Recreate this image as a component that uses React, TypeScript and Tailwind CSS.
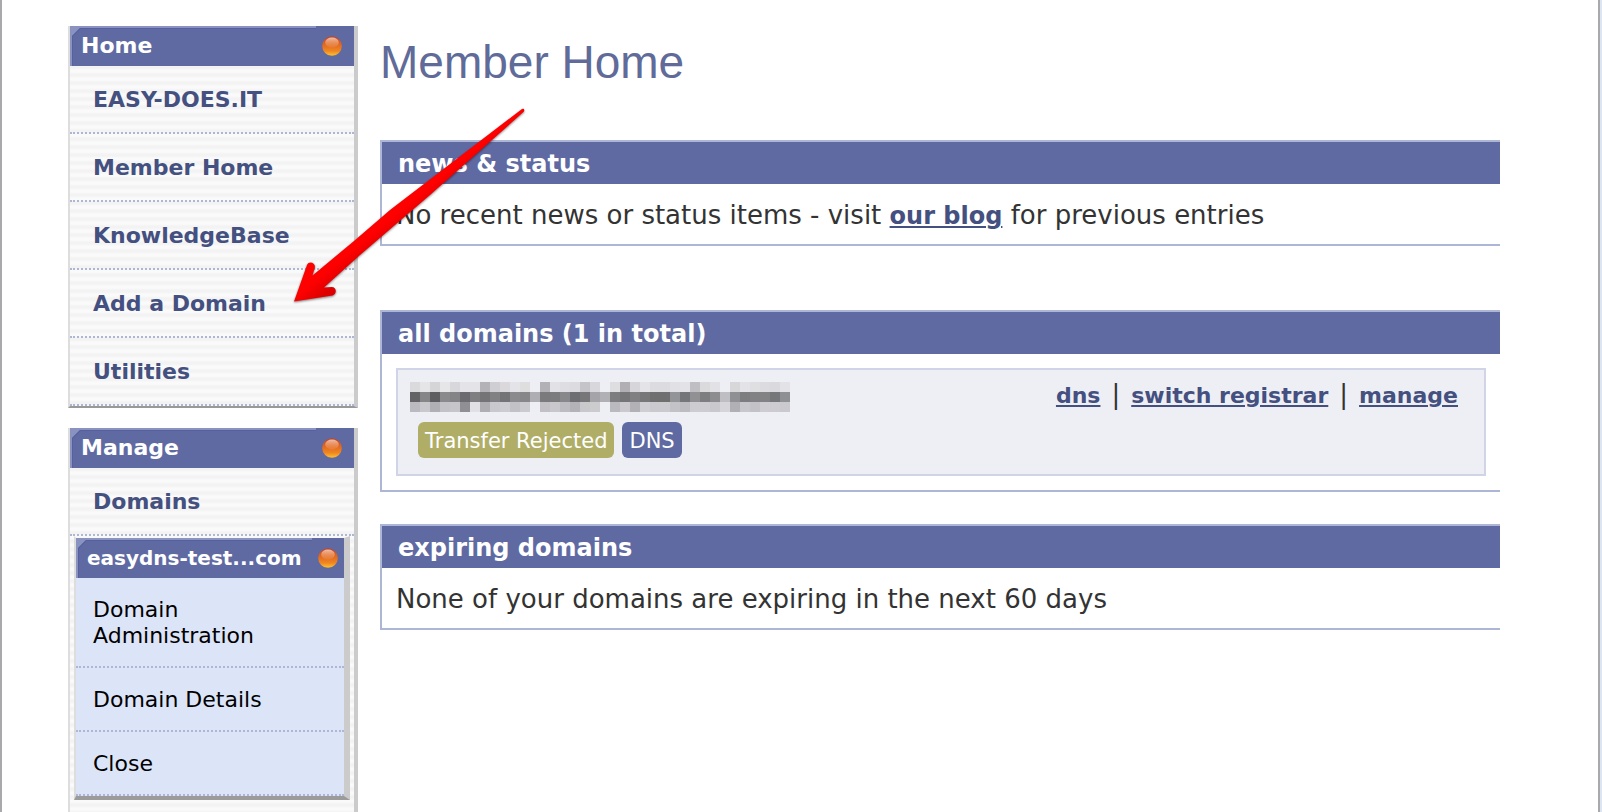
import type { ReactNode } from "react";

const ROWS: string[][] = [
  ["dadadc", "e5e5e7", "d5d5d7", "e6e6e8", "d8d8dc", "e4e4e8", "e4e4e8", "b3b3b7", "cfcfd3", "dbd8dc", "e4e4e8", "dededf", "", "b1b1b6", "e2e2e6", "dedee2", "dcdce0", "c5c5c9", "d8d8dc", "", "dedee0", "b1aeb4", "d6d6da", "e4e4e8", "dcdce0", "dcdce0", "e1e1e5", "e3e3e7", "bfbfc3", "dadadd", "e2e2e6", "", "d7d7da", "e3e3e7", "dfdfe2", "dcdce0", "dadade", "e3e3e7"],
  ["636366", "868688", "5e5e60", "8a8a8c", "848486", "6c6c70", "7f7f82", "747477", "818184", "747476", "8b8b8e", "87878a", "aeaeb3", "7a7a7c", "7c7c7e", "88888a", "6d6f72", "77777a", "a4a4a9", "b0b0b5", "7d7d80", "757578", "808083", "77777a", "6f6f70", "6f6f70", "929497", "757679", "919194", "7c7e7f", "8d8d90", "bfbfc3", "8e9093", "7d7d80", "828285", "828284", "757779", "8f9093"],
  ["babac0", "c8c8cd", "b0b0b4", "c3c3c7", "c5c5ca", "8f8f94", "e0e0e5", "aeaeb3", "c8c8cd", "cdcdd1", "c2c2c6", "cbcbcf", "", "c2c0c6", "c8c8cc", "bcbcc1", "b2b2b7", "c8c8cd", "cccccf", "", "b9b9bf", "cbc8ce", "b1b1b6", "cfcfd3", "cacace", "cacacf", "c2c2c7", "bcbcc1", "cdcdd1", "cdcdd1", "c8c8cd", "d6d6da", "b0b0b5", "c7c7cc", "c2c2c7", "cfccd1", "cecbd0", "c9c9ce"],
];

function Orb() {
  return (
    <svg width="20" height="20" viewBox="0 0 20 20" aria-hidden="true">
      <defs>
        <linearGradient id="orb-body" x1="0" y1="0" x2="0" y2="1">
          <stop offset="0" stopColor="#b8402c" />
          <stop offset="0.35" stopColor="#de621f" />
          <stop offset="0.75" stopColor="#f08622" />
          <stop offset="1" stopColor="#fdc52c" />
        </linearGradient>
        <linearGradient id="orb-shine" x1="0" y1="0" x2="0" y2="1">
          <stop offset="0" stopColor="#f3c0a4" />
          <stop offset="1" stopColor="#ec8a4c" stopOpacity="0.4" />
        </linearGradient>
      </defs>
      <circle cx="10" cy="10" r="9.8" fill="url(#orb-body)" />
      <ellipse cx="10" cy="6.5" rx="6.8" ry="5" fill="url(#orb-shine)" />
    </svg>
  );
}

function MenuHeader({ title, nested = false }: { title: string; nested?: boolean }) {
  return (
    <div className="relative flex h-10 items-center justify-between bg-[#606aa2] pr-3 pl-[11px]">
      <svg
        className={nested ? "absolute top-0 left-0 h-10 w-[236px]" : "absolute top-0 left-0 h-10 w-[246px]"}
        viewBox="0 0 246 40"
        preserveAspectRatio="xMinYMin slice"
        aria-hidden="true"
      >
        <path d="M0 0H246V2H10L2 10V40H0Z" fill="#8a93c0" />
        <path d="M246 2H10L2 10V40H3V10.500L10.500 3H246Z" fill="#5660a0" />
      </svg>
      <h2
        className={
          nested
            ? "relative text-xl leading-6 font-bold whitespace-nowrap text-white"
            : "relative text-[22px] leading-6 font-bold text-white"
        }
      >
        {title}
      </h2>
      <span className={nested ? "relative -mr-1.5" : "relative"}>
        <Orb />
      </span>
    </div>
  );
}

const stripes = "bg-[repeating-linear-gradient(to_bottom,#f3f3f3_0px,#f3f3f3_2px,#fafafa_4px,#fafafa_6px,#f3f3f3_8px)]";
const menuBox = "border-r-4 border-b-2 border-l-2 border-r-[#cbcbcb] border-b-[#999999] border-l-[#dddddd]";

function MenuItem({ children }: { children: ReactNode }) {
  return (
    <li className="border-b-2 border-dotted border-[#aeb6d6]">
      <a href="#" className="block px-[23px] pt-[21px] pb-[19px] text-[22px] leading-[26px] font-bold text-[#44507f]">
        {children}
      </a>
    </li>
  );
}

function SubItem({ children }: { children: ReactNode }) {
  return (
    <li className="border-b-2 border-dotted border-[#aeb6d6]">
      <a href="#" className="block pt-[19px] pr-12 pb-[17px] pl-[17px] text-[22px] leading-[26px] text-black">
        {children}
      </a>
    </li>
  );
}

function Panel({ title, children }: { title: string; children: ReactNode }) {
  return (
    <section className="border-y-2 border-l-2 border-[#aeb6d6] bg-white">
      <h2 className="bg-[#606aa2] px-4 pt-[9px] pb-[7px] text-2xl leading-[26px] font-bold text-white">{title}</h2>
      {children}
    </section>
  );
}

function DomainName() {
  return (
    <svg width="380" height="30" viewBox="0 0 380 30" shapeRendering="crispEdges" role="img" aria-label="Hidden domain name">
      {ROWS.map((row, y) =>
        row.map((c, x) => (c ? <rect key={x + "-" + y} x={x * 10} y={y * 10} width="10" height="10" fill={"#" + c} /> : null)),
      )}
    </svg>
  );
}

function Arrow() {
  return (
    <svg
      className="pointer-events-none absolute top-[100px] left-[278px] overflow-visible"
      width="260"
      height="220"
      viewBox="0 0 260 220"
      aria-hidden="true"
    >
      <defs>
        <linearGradient id="arrow-fill" gradientUnits="userSpaceOnUse" x1="93" y1="115" x2="112" y2="138">
          <stop offset="0.45" stopColor="#ff0000" />
          <stop offset="1" stopColor="#de0000" />
        </linearGradient>
      </defs>
      <path
        d="M14 201.500L27 165C28.500 161 35 162 35 167L32.500 175.500L74 141L110 110L242 9Q245 8 244 11.500L150 95L80 155L44 187.500L51.500 187C57 187 57 194 52.500 195.500Z"
        fill="url(#arrow-fill)"
        className="drop-shadow-[0px_1px_1px_rgba(0,0,0,0.5)]"
      />
    </svg>
  );
}

const linkStyle = "font-bold text-[#44507f] underline decoration-2 underline-offset-2";
const message = "px-3.5 pt-4 pb-3.5 text-[26px] leading-[30px]";

export default function App() {
  return (
    <div className="bg-[#dde4f2] pr-0.5">
      <div className="relative flex h-screen items-start overflow-hidden border-x-2 border-[#a9a9ab] bg-white pl-[66px] font-['Verdana','DejaVu_Sans',sans-serif]">
        <nav className="mt-[26px] w-[290px] shrink-0" aria-label="Main menu">
          <div className={menuBox + " " + stripes}>
            <MenuHeader title="Home" />
            <ul>
              <MenuItem>EASY-DOES.IT</MenuItem>
              <MenuItem>Member Home</MenuItem>
              <MenuItem>KnowledgeBase</MenuItem>
              <MenuItem>Add a Domain</MenuItem>
              <MenuItem>Utilities</MenuItem>
            </ul>
          </div>
          <div className={menuBox + " mt-5 pb-10 " + stripes}>
            <MenuHeader title="Manage" />
            <ul>
              <MenuItem>Domains</MenuItem>
            </ul>
            <div className="mx-1 border-t-2 border-r-6 border-b-4 border-l-2 border-t-[#f8f8f8] border-r-[#cbcbcb] border-b-[#9b9b9b] border-l-[#dddddd] bg-[#dce4f8]">
              <MenuHeader title="easydns-test...com" nested />
              <ul>
                <SubItem>Domain Administration</SubItem>
                <SubItem>Domain Details</SubItem>
                <SubItem>Close</SubItem>
              </ul>
            </div>
          </div>
        </nav>

        <main className="mr-[98px] ml-[22px] min-w-0 flex-1 pt-8 text-[#333333]">
          <h1 className="font-['Liberation_Sans',Arial,sans-serif] text-[46px] leading-[60px] text-[#606b99]">Member Home</h1>
          <div className="mt-12">
            <Panel title="news &amp; status">
              <p className={message}>
                No recent news or status items - visit{" "}
                <a href="#" className={linkStyle + " text-2xl leading-none"}>
                  our blog
                </a>{" "}
                for previous entries
              </p>
            </Panel>
          </div>
          <div className="mt-16">
            <Panel title="all domains (1 in total)">
              <div className="m-3.5 flex items-start justify-between border-2 border-[#d0d4e6] bg-[#eeeff5] pt-3 pr-[26px] pb-4 pl-3">
                <div>
                  <DomainName />
                  <div className="mt-2.5 ml-2 flex gap-2 text-[21px] leading-6 text-white">
                    <span className="rounded-md bg-[#b0ae66] px-[7px] pt-[7px] pb-[5px]">Transfer Rejected</span>
                    <span className="rounded-md bg-[#606aa2] px-[7px] pt-[7px] pb-[5px]">DNS</span>
                  </div>
                </div>
                <div className="flex items-baseline gap-[11px] text-[22px] leading-6">
                  <a href="#" className={linkStyle}>dns</a>
                  <span className="text-[26px]">|</span>
                  <a href="#" className={linkStyle}>switch registrar</a>
                  <span className="text-[26px]">|</span>
                  <a href="#" className={linkStyle}>manage</a>
                </div>
              </div>
            </Panel>
          </div>
          <div className="mt-8">
            <Panel title="expiring domains">
              <p className={message}>None of your domains are expiring in the next 60 days</p>
            </Panel>
          </div>
        </main>
        <Arrow />
      </div>
    </div>
  );
}
